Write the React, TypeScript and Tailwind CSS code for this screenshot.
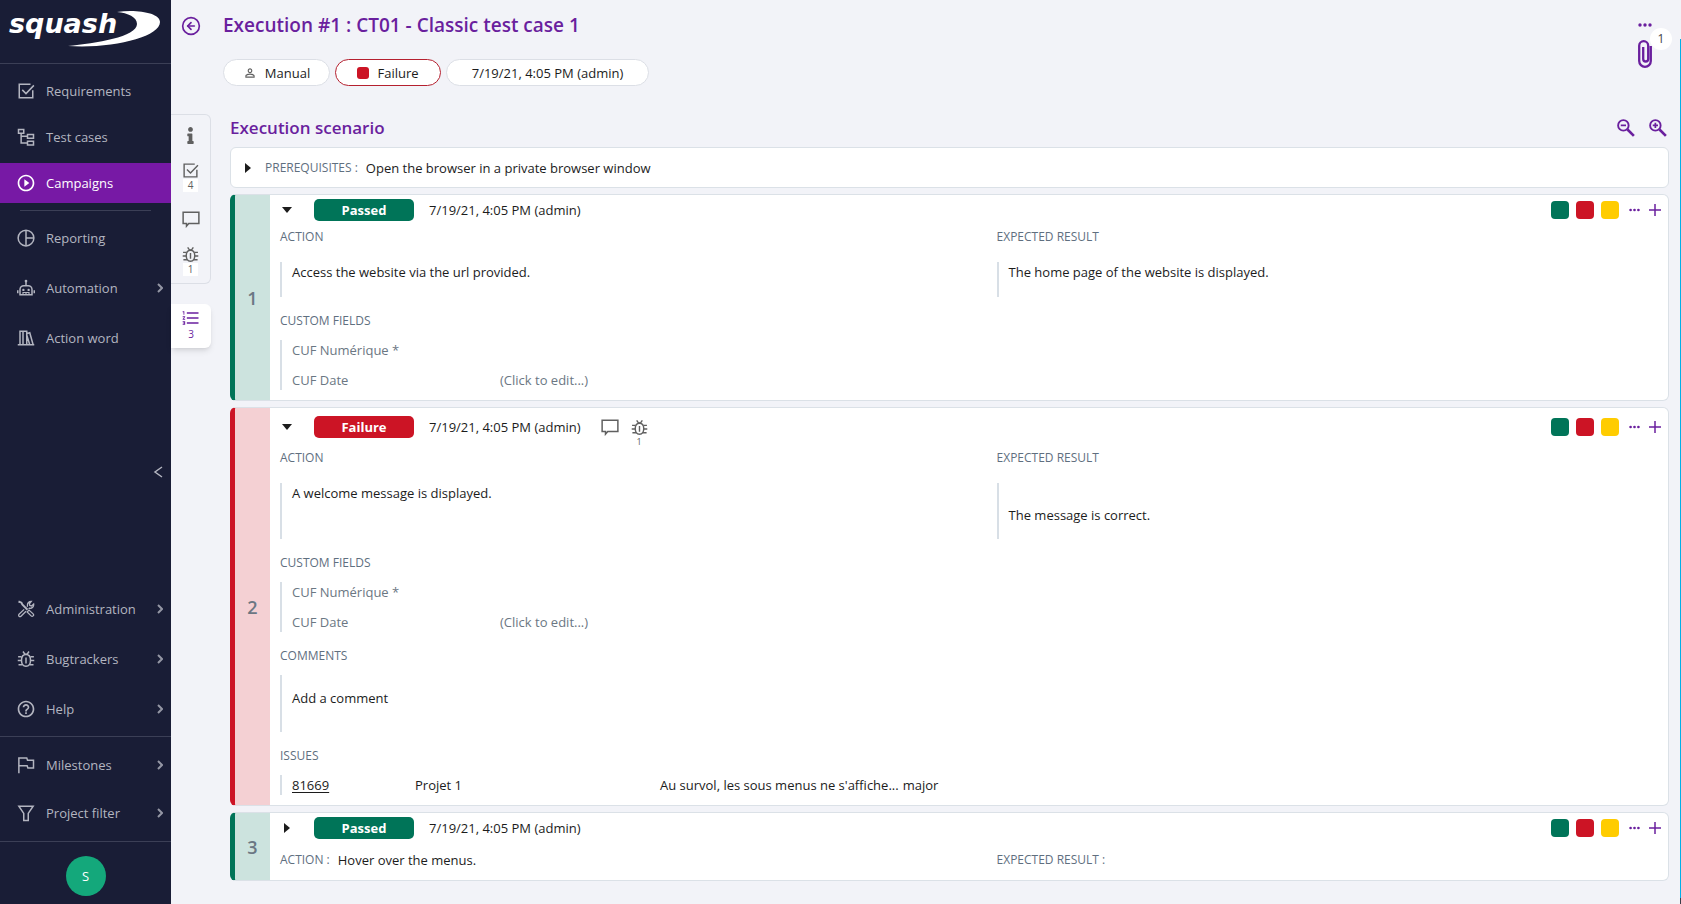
import React, { FC, ReactNode } from 'react'
import { CircleArrowLeft } from 'lucide-react'
import { FaInfo } from 'react-icons/fa'
import {
    MdFormatListNumbered,
    MdHelpOutline,
    MdPersonOutline,
    MdPlayCircleOutline,
} from 'react-icons/md'


interface iconProps {
    className?: string;
    children?: ReactNode;
}
const Icon: FC<iconProps> = ({ className = 'size-5', children }) => {
    return (
        <svg viewBox="0 0 24 24" fill="none" stroke="currentColor" strokeWidth="2" className={className} aria-hidden="true">
            {children}
        </svg>
    );
};

const CheckIcon: FC<iconProps> = ({ className }) => (
    <Icon className={className}>
        <path d="M18 3H3v18h18V11" />
        <path d="M7 10.5l5 5L22.5 4.5" />
    </Icon>
);

const TreeIcon: FC<iconProps> = ({ className }) => (
    <Icon className={className}>
        <path d="M2 2h7v5H2zM14 8.500h8v5h-8zM14 17.500h8v5h-8zM5.500 7v13H14M5.500 11H14" />
    </Icon>
);

const ReportIcon: FC<iconProps> = ({ className }) => (
    <Icon className={className}>
        <circle cx="12" cy="12" r="10.500" />
        <path d="M12 2v20M12 12h10" />
    </Icon>
);

const RobotIcon: FC<iconProps> = ({ className }) => (
    <Icon className={className}>
        <path d="M12 4v5M9 9h6a5 5 0 0 1 5 5v7H4v-7a5 5 0 0 1 5-5zM1 15v4M23 15v4" />
        <path d="M8 21v-3h8v3M12 18v3" strokeWidth="1.5" />
        <circle cx="12" cy="2.8" r="1.8" fill="currentColor" stroke="none" />
        <circle cx="8.5" cy="14.5" r="1.6" fill="currentColor" stroke="none" />
        <circle cx="15.5" cy="14.5" r="1.6" fill="currentColor" stroke="none" />
    </Icon>
);

const BooksIcon: FC<iconProps> = ({ className }) => (
    <Icon className={className}>
        <path d="M1 21h22M4 21V3h4v18M8 3h5v18M13.5 6l3.5-1 4.5 16M13 8l4 13" />
    </Icon>
);

const ToolsIcon: FC<iconProps> = ({ className }) => (
    <Icon className={className}>
        <path d="M2 2l4 1.500 1 2.500 7 7" strokeWidth="2.500" />
        <path d="M13.500 16l2.500-2.500 5.500 5a1.800 1.800 0 0 1-2.700 2.700z" strokeWidth="1.700" />
        <path d="M9.500 12.500L2.700 19a1.800 1.800 0 0 0 2.600 2.600L12 15M13.500 9l.5-1c-.6-3.500 1.500-6 5-6l-2.500 3 .5 2.200 2.500.8 2.700-2.700c.6 3.700-2 6.300-5.700 5.700l-1 .8" strokeWidth="1.700" />
    </Icon>
);

const BugIcon: FC<iconProps> = ({ className }) => (
    <Icon className={className}>
        <path d="M12 6c4 0 6 3 6 7.500S16 21.500 12 21.500 6 18 6 13.500 8 6 12 6z" />
        <path d="M12 10v8M8 2l2.500 3.500h3L16 2M1.500 9H6M18 9h4.500M1 14h5M18 14h5M2 19.500h5M17 19.500h5" />
    </Icon>
);

const FlagIcon: FC<iconProps> = ({ className }) => (
    <Icon className={className}>
        <path d="M2.500 23V2.500H13l1 3h8V16h-7.500l-1-3h-11" />
    </Icon>
);

const FilterIcon: FC<iconProps> = ({ className }) => (
    <Icon className={className}>
        <path d="M2.500 3h19L15 12.500V22H9v-9.500z" />
    </Icon>
);

const CommentIcon: FC<iconProps> = ({ className }) => (
    <Icon className={className}>
        <path d="M1.500 3h21v15H9l-3 3.500V18H1.500z" />
    </Icon>
);

const ZoomIcon: FC<{ plus?: boolean }> = ({ plus }) => (
    <Icon className="size-[18px]">
        <circle cx="8.500" cy="8.500" r="7" strokeWidth="2.500" />
        <path d={plus ? 'M5 8.500h7M8.500 5v7' : 'M5 8.500h7'} strokeWidth="2.300" />
        <path d="M14 14l8.500 8.500" strokeWidth="3.500" />
    </Icon>
);

const ClipIcon: FC<iconProps> = ({ className }) => (
    <svg viewBox="0 0 14 28" fill="none" stroke="currentColor" strokeWidth="2.300" className={className} aria-hidden="true">
        <path d="M12.800 6v15a5.800 5.800 0 0 1-11.600 0V5.700a4.500 4.500 0 0 1 9 0V19a2.500 2.500 0 0 1-5 0V7" />
    </svg>
);

const DotsIcon: FC<iconProps> = ({ className }) => (
    <svg viewBox="0 0 14 4" fill="currentColor" className={className} aria-hidden="true">
        <circle cx="2" cy="2" r="1.700" />
        <circle cx="7" cy="2" r="1.700" />
        <circle cx="12" cy="2" r="1.700" />
    </svg>
);

const Caret: FC<{ open?: boolean }> = ({ open }) => (
    <svg viewBox="0 0 10 10" fill="currentColor" className="size-2.5" aria-hidden="true">
        <path d={open ? 'M0 2h10L5 8z' : 'M2 0v10l6-5z'} />
    </svg>
);

const Logo = () => {
    return (
        <svg viewBox="0 0 171 63" className="w-[171px] h-[63px]" fill="#fff" role="img" aria-label="squash">
            <text x="9" y="33" fontSize="27" fontWeight="700" fontStyle="italic" fontFamily="'DejaVu Sans', sans-serif">squash</text>
            <path d="M117 12C137 9 160 13 160 22C160 37 112 49 68 46C96 43 137 37 137 24C137 17 128 13 117 12Z" />
        </svg>
    );
};

interface navItemProps {
    label: string;
    icon: ReactNode;
    active?: boolean;
    more?: boolean;
}
const NavItem: FC<navItemProps> = ({ label, icon, active, more }) => {
    return (
        <a href="#" className={`flex items-center h-10 pl-4 pr-2 ${active ? 'bg-[#7719a5] text-white' : 'text-[#b3b5c0]'}`}>
            <span className="flex justify-center w-5 mr-2.5">{icon}</span>
            <span className="flex-1 whitespace-nowrap">{label}</span>
            {more && (
                <svg viewBox="0 0 6 10" fill="none" stroke="currentColor" strokeWidth="2" className="w-1.5 h-2.5 opacity-80" aria-hidden="true">
                    <path d="M1 1l4 4-4 4" />
                </svg>
            )}
        </a>
    );
};

const Sidebar = () => {
    return (
        <nav className="flex flex-col w-[171px] shrink-0 bg-[#191d36]">
            <div className="border-b border-[#3b3f56]"><Logo /></div>
            <div className="flex flex-col gap-1.5 pt-[7px]">
                <NavItem label="Requirements" icon={<CheckIcon className="size-[18px]" />} />
                <NavItem label="Test cases" icon={<TreeIcon className="size-[18px]" />} />
                <NavItem label="Campaigns" icon={<MdPlayCircleOutline className="size-5" />} active />
            </div>
            <hr className="mx-5 my-[7px] border-[#3b3f56]" />
            <div className="flex flex-col gap-2.5">
                <NavItem label="Reporting" icon={<ReportIcon className="size-[18px]" />} />
                <NavItem label="Automation" icon={<RobotIcon className="size-[18px]" />} more />
                <NavItem label="Action word" icon={<BooksIcon className="size-[18px]" />} />
            </div>
            <div className="flex flex-1 items-center justify-end pr-2 pb-1">
                <button aria-label="Collapse menu" className="text-[#b3b5c0]">
                    <svg viewBox="0 0 10 12" fill="none" stroke="currentColor" strokeWidth="1.500" className="w-2.5 h-3" aria-hidden="true">
                        <path d="M9 1L2 6l7 5" />
                    </svg>
                </button>
            </div>
            <div className="flex flex-col gap-2.5 pb-[7px] border-b border-[#3b3f56]">
                <NavItem label="Administration" icon={<ToolsIcon className="size-[18px]" />} more />
                <NavItem label="Bugtrackers" icon={<BugIcon className="size-[18px]" />} more />
                <NavItem label="Help" icon={<MdHelpOutline className="size-5" />} more />
            </div>
            <div className="flex flex-col gap-2 py-2 border-b border-[#3b3f56]">
                <NavItem label="Milestones" icon={<FlagIcon className="size-[18px]" />} more />
                <NavItem label="Project filter" icon={<FilterIcon className="size-[18px]" />} more />
            </div>
            <div className="flex justify-center pt-3.5 pb-2">
                <button className="size-10 rounded-full bg-[#14a87b] text-white">S</button>
            </div>
        </nav>
    );
};

const Rail = () => {
    return (
        <div className="flex flex-col gap-5 w-10 text-[#606060]">
            <div className="flex flex-col items-center h-[170px] py-3 border border-l-0 border-[#dcdfe6] rounded-r-md">
                <button aria-label="Information"><FaInfo className="size-[17px]" /></button>
                <button className="flex flex-col items-center mt-4.5 text-[10px] leading-3">
                    <CheckIcon className="size-[17px]" />
                    <span className="w-[15px] h-[13px] bg-white">4</span>
                </button>
                <button aria-label="Comments" className="mt-4.5"><CommentIcon className="size-[18px]" /></button>
                <button className="flex flex-col items-center mt-4.5 text-[10px] leading-3">
                    <BugIcon className="size-[17px]" />
                    <span className="w-[15px] h-[13px] bg-white">1</span>
                </button>
            </div>
            <button className="flex flex-col items-center h-11 pt-1 bg-white rounded-r-md shadow-md text-[10px] leading-3 text-[#6a1f9e]">
                <MdFormatListNumbered className="size-5" />
                3
            </button>
        </div>
    );
};

const Label: FC<{ children: ReactNode }> = ({ children }) => (
    <h3 className="text-xs leading-5 text-[#5f6f7f] whitespace-nowrap">{children}</h3>
);

interface blockProps {
    className?: string;
    children?: ReactNode;
}
const Block: FC<blockProps> = ({ className = '', children }) => (
    <div className={`border-l-2 border-[#d8dfe6] pl-2.5 ${className}`}>{children}</div>
);

interface stepProps {
    index: number;
    status: 'Passed' | 'Failure';
    open?: boolean;
    issues?: number;
    children?: ReactNode;
}
const Step: FC<stepProps> = ({ index, status, open, issues, children }) => {
    const passed = status === 'Passed';
    return (
        <article className={`flex rounded-md border border-l-[5px] border-[#dbe1e7] bg-white overflow-hidden ${passed ? 'border-l-[#007458]' : 'border-l-[#cc1425]'}`}>
            <div className={`flex items-center justify-center w-[35px] shrink-0 text-lg font-semibold text-[#6b7783] ${passed ? 'bg-[#cce3de]' : 'bg-[#f4d0d3]'}`}>
                {index}
            </div>
            <div className="flex-1 px-2.5 pb-2.5">
                <div className={`flex items-center ${issues ? 'pt-2 pb-2.5' : 'pt-1 pb-1.5'}`}>
                    <button aria-label="Toggle step" className="ml-0.5 mr-[22px]"><Caret open={open} /></button>
                    <span className={`w-[100px] h-[22px] rounded-[5px] text-center leading-[22px] font-bold text-white ${passed ? 'bg-[#007458]' : 'bg-[#cc1425]'}`}>{status}</span>
                    <span className="ml-[15px]">7/19/21, 4:05 PM (admin)</span>
                    {issues && (
                        <span className="flex gap-3 ml-5 text-[#606060]">
                            <button aria-label="Comments"><CommentIcon className="size-[18px]" /></button>
                            <button className="relative">
                                <BugIcon className="size-[17px]" />
                                <span className="absolute top-full inset-x-0 text-center text-[9px] leading-3">{issues}</span>
                            </button>
                        </span>
                    )}
                    <div className="flex items-center gap-[7px] ml-auto -mr-[3px] text-[#6a1f9e]">
                        <button aria-label="Pass" className="size-[18px] rounded bg-[#007458]" />
                        <button aria-label="Fail" className="size-[18px] rounded bg-[#cc1425]" />
                        <button aria-label="Block" className="size-[18px] rounded bg-[#ffcc00]" />
                        <button aria-label="More" className="flex justify-center w-4"><DotsIcon className="w-[11px] h-1" /></button>
                        <button aria-label="Add">
                            <svg viewBox="0 0 12 12" stroke="currentColor" strokeWidth="1.500" className="size-3" aria-hidden="true">
                                <path d="M6 0v12M0 6h12" />
                            </svg>
                        </button>
                    </div>
                </div>
                {children}
            </div>
        </article>
    );
};

interface actionProps {
    action: string;
    result: string;
    tall?: boolean;
}
const ActionRow: FC<actionProps> = ({ action, result, tall }) => {
    return (
        <div className="grid grid-cols-[52fr_48fr]">
            <div className="flex flex-col gap-[15px]">
                <Label>ACTION</Label>
                <Block className={tall ? 'h-14' : 'h-[35px]'}>{action}</Block>
            </div>
            <div className="flex flex-col gap-[15px]">
                <Label>EXPECTED RESULT</Label>
                <Block className={tall ? 'h-14 pt-[22px]' : 'h-[35px]'}>{result}</Block>
            </div>
        </div>
    );
};

const CustomFields = () => {
    return (
        <section className="mt-3.5">
            <Label>CUSTOM FIELDS</Label>
            <Block className="mt-[9px] text-[#6b7783]">
                <dl className="grid grid-cols-[208px_1fr] gap-y-2.5">
                    <dt>CUF Numérique *</dt>
                    <dd></dd>
                    <dt>CUF Date</dt>
                    <dd><button>(Click to edit...)</button></dd>
                </dl>
            </Block>
        </section>
    );
};

const Execution = () => {
    return (
        <main className="flex-1 min-w-0 pr-[11px]">
            <header className="flex">
                <button aria-label="Back" className="self-start mt-4 ml-2.5 mr-3 text-[#6a1f9e]"><CircleArrowLeft className="size-5" /></button>
                <div className="flex-1 ml-[10px]">
                    <h1 className="mt-3 text-[19px] leading-[26px] font-semibold text-[#6a1f9e]">Execution #1 : CT01 - Classic test case 1</h1>
                    <div className="flex gap-[5px] mt-[21px]">
                        <span className="flex items-center justify-center gap-2 w-[107px] h-[27px] rounded-full border border-[#dcdfe6] bg-white">
                            <MdPersonOutline className="size-3.5 text-[#606060]" />Manual
                        </span>
                        <span className="flex items-center justify-center gap-2 w-[106px] h-[27px] rounded-full border border-[#b5202f] bg-white">
                            <i className="size-3 rounded-[3px] bg-[#cc1425]" />Failure
                        </span>
                        <span className="flex items-center justify-center w-[203px] h-[27px] rounded-full border border-[#dcdfe6] bg-white">7/19/21, 4:05 PM (admin)</span>
                    </div>
                </div>
                <div className="flex flex-col items-center mt-[23px] mr-[17px] text-[#6a1f9e]">
                    <button aria-label="More" className="h-1"><DotsIcon className="w-3.5 h-1" /></button>
                    <button className="relative mt-[13px]">
                        <ClipIcon className="w-3.5 h-7" />
                        <span className="absolute -top-3 left-3 size-[22px] rounded-full bg-white text-xs leading-[22px] text-[#444]">1</span>
                    </button>
                </div>
            </header>
            <div className="flex gap-[19px] mt-7">
                <Rail />
                <section className="flex-1 min-w-0">
                    <div className="flex items-center justify-between h-[27px] mb-1.5 text-[#6a1f9e]">
                        <h2 className="text-[17px] font-semibold">Execution scenario</h2>
                        <div className="flex gap-3.5 mr-0.5">
                            <button aria-label="Zoom out"><ZoomIcon /></button>
                            <button aria-label="Zoom in"><ZoomIcon plus /></button>
                        </div>
                    </div>
                    <div className="flex flex-col gap-1.5">
                        <div className="flex items-center h-[41px] pl-3 rounded-md border border-[#dbe1e7] bg-white">
                            <button aria-label="Toggle prerequisites" className="mr-3"><Caret /></button>
                            <Label>PREREQUISITES :</Label>
                            <p className="ml-2">Open the browser in a private browser window</p>
                        </div>
                        <Step index={1} status="Passed" open>
                            <ActionRow action="Access the website via the url provided." result="The home page of the website is displayed." />
                            <CustomFields />
                        </Step>
                        <Step index={2} status="Failure" open issues={1}>
                            <ActionRow tall action="A welcome message is displayed." result="The message is correct." />
                            <CustomFields />
                            <section className="mt-3.5">
                                <Label>COMMENTS</Label>
                                <Block className="flex items-center h-[57px] mt-[9px] pb-3">Add a comment</Block>
                            </section>
                            <section className="mt-3.5">
                                <Label>ISSUES</Label>
                                <Block className="mt-[9px]">
                                    <table>
                                        <tbody>
                                            <tr>
                                                <td className="w-[123px] p-0"><a href="#" className="underline underline-offset-2">81669</a></td>
                                                <td className="w-[245px] p-0">Projet 1</td>
                                                <td className="pr-1">Au survol, les sous menus ne s'affiche...</td>
                                                <td className="p-0">major</td>
                                            </tr>
                                        </tbody>
                                    </table>
                                </Block>
                            </section>
                        </Step>
                        <Step index={3} status="Passed">
                            <div className="grid grid-cols-[52fr_48fr] mt-[5px]">
                                <div className="flex gap-2">
                                    <Label>ACTION :</Label>
                                    <p>Hover over the menus.</p>
                                </div>
                                <Label>EXPECTED RESULT :</Label>
                            </div>
                        </Step>
                    </div>
                </section>
            </div>
        </main>
    );
};

const App = () => {
    return (
        <div className="flex min-h-screen bg-[#f2f3f8] font-['Open_Sans',sans-serif] text-[13px] leading-5 text-[#1c1c1c]">
            <Sidebar />
            <Execution />
            <div className="w-px mt-[39px] border-b-[6px] border-[#3a3f4a] bg-[#00b0e8]" />
        </div>
    );
};

export default App;
